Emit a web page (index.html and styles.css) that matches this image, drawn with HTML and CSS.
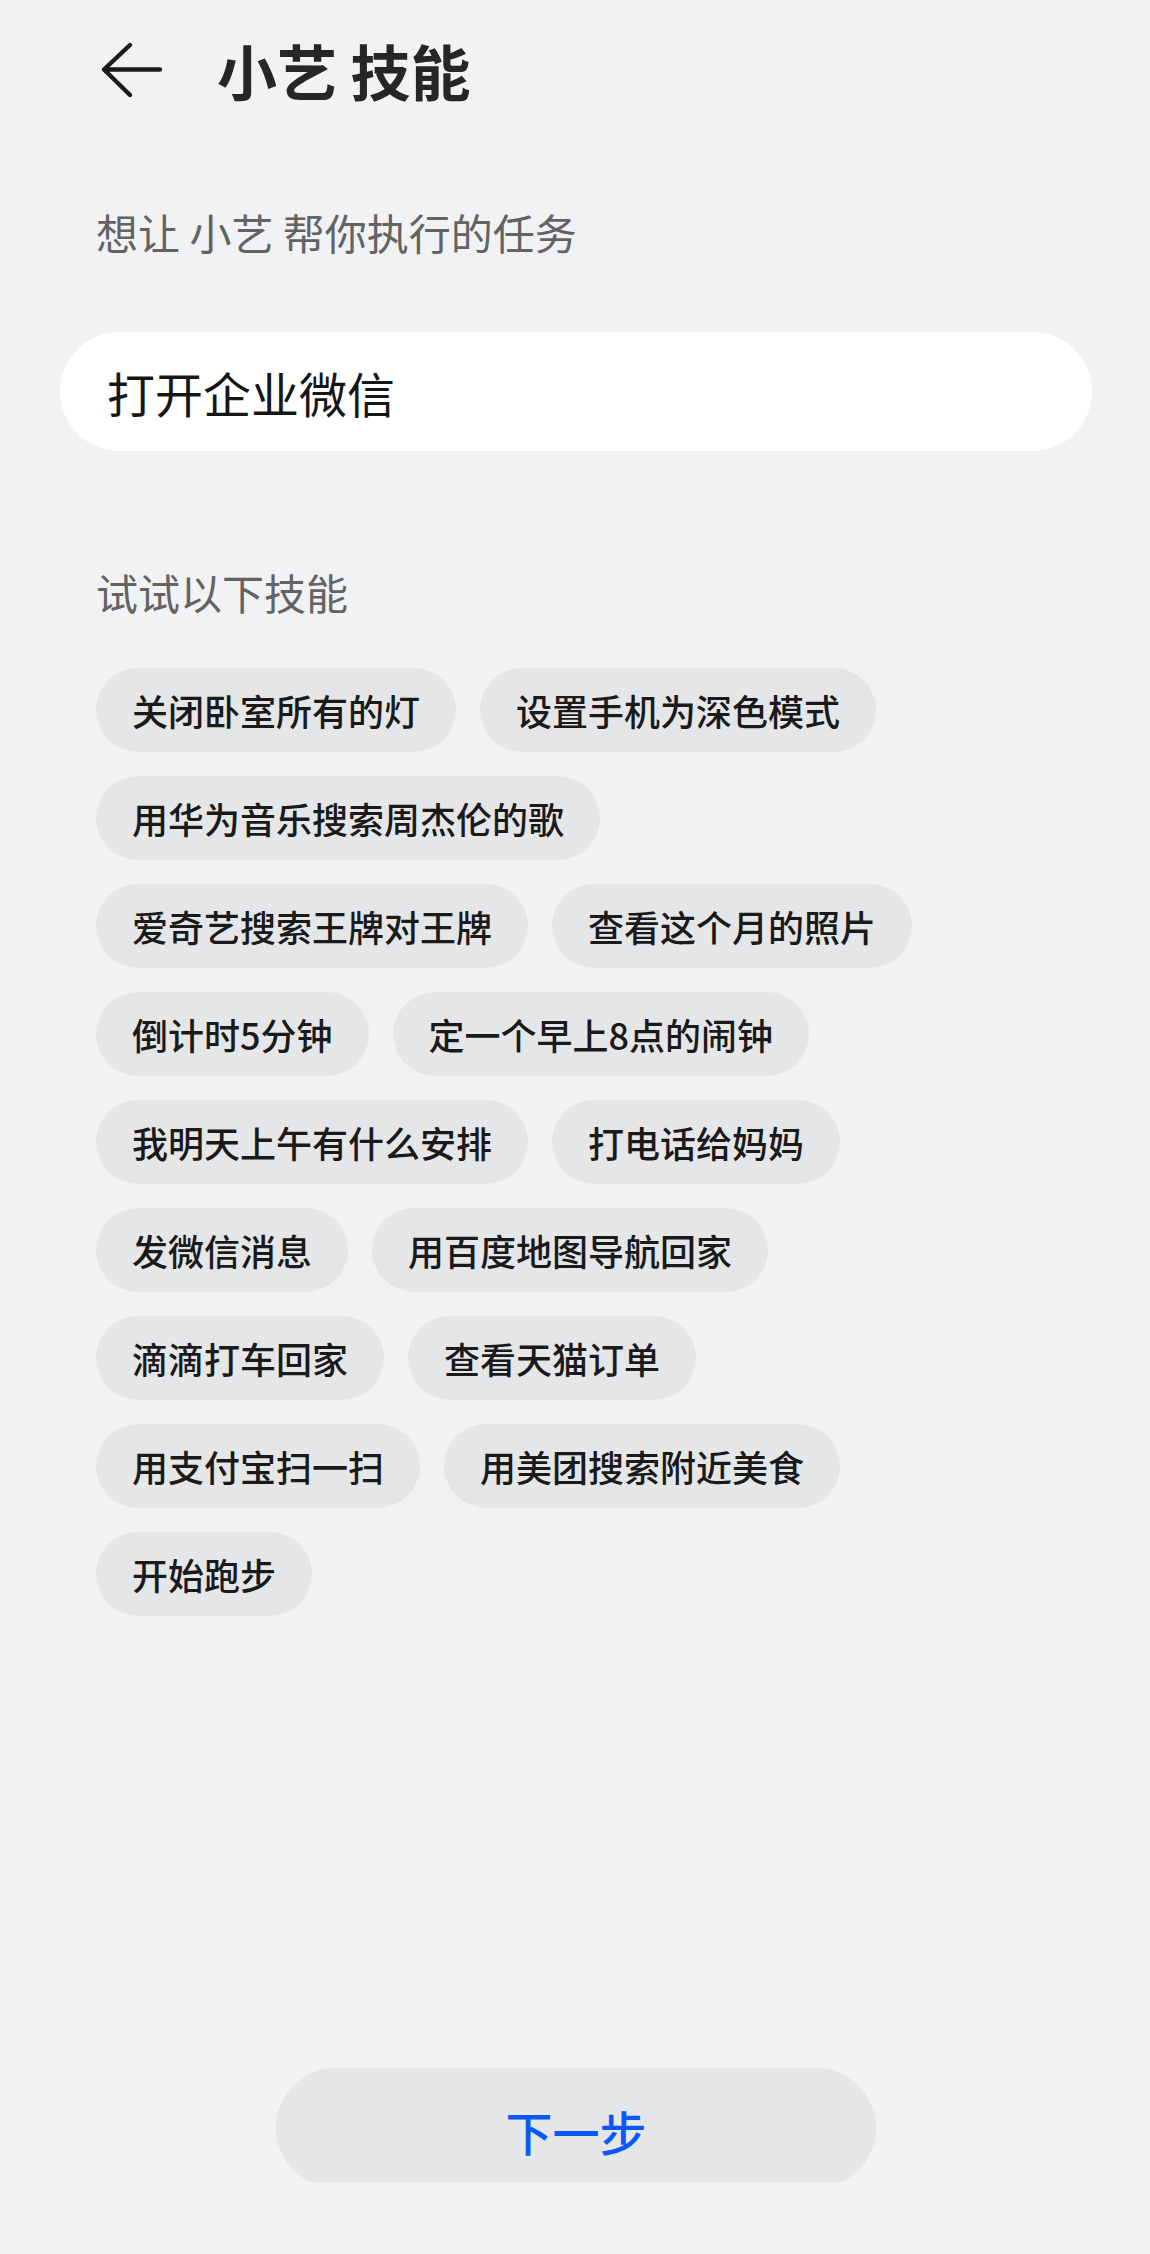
FILE: index.html
```html
<!DOCTYPE html>
<html lang="zh-CN">
<head>
<meta charset="utf-8">
<title>小艺 技能</title>
<link rel="stylesheet" href="styles.css">
</head>
<body>
<div class="page">
  <header class="header">
    <svg class="back" viewBox="0 0 64 60" width="64" height="60" aria-hidden="true">
      <path d="M30 5 L4 29.5 L30 55 M4 29.5 H60" fill="none" stroke="#1b1b1b" stroke-width="4.4" stroke-linecap="round" stroke-linejoin="round"/>
    </svg>
    <h1 class="title">小艺 技能</h1>
  </header>

  <p class="label label-task">想让 小艺 帮你执行的任务</p>

  <div class="input">打开企业微信</div>

  <p class="label label-try">试试以下技能</p>

  <div class="chips">
    <span class="chip">关闭卧室所有的灯</span>
    <span class="chip">设置手机为深色模式</span>
    <span class="chip">用华为音乐搜索周杰伦的歌</span>
    <span class="chip">爱奇艺搜索王牌对王牌</span>
    <span class="chip">查看这个月的照片</span>
    <span class="chip">倒计时5分钟</span>
    <span class="chip">定一个早上8点的闹钟</span>
    <span class="chip">我明天上午有什么安排</span>
    <span class="chip">打电话给妈妈</span>
    <span class="chip">发微信消息</span>
    <span class="chip">用百度地图导航回家</span>
    <span class="chip">滴滴打车回家</span>
    <span class="chip">查看天猫订单</span>
    <span class="chip">用支付宝扫一扫</span>
    <span class="chip">用美团搜索附近美食</span>
    <span class="chip">开始跑步</span>
  </div>

  <footer class="footer">
    <div class="btn-clip">
      <button class="next" type="button">下一步</button>
    </div>
  </footer>
</div>
</body>
</html>
```

FILE: styles.css
```css
* {
  box-sizing: border-box;
}

html, body {
  margin: 0;
  padding: 0;
  background: #f1f2f4;
}

body {
  font-family: "Noto Sans CJK SC", "Noto Sans", sans-serif;
  color: #1a1a1a;
}

.page {
  height: 2254px;
  display: flex;
  flex-direction: column;
}

.header {
  height: 140px;
  display: flex;
  align-items: center;
  padding-left: 100px;
}

.back {
  display: block;
  flex: none;
}

.title {
  margin: 0 0 0 53px;
  font-size: 60px;
  line-height: 72px;
  font-weight: 700;
  color: #262626;
  letter-spacing: 0;
}

.label {
  margin: 0;
  padding-left: 96px;
  font-size: 42px;
  line-height: 50px;
  color: #636363;
  font-weight: 400;
}

.label-task {
  margin-top: 67px;
}

.input {
  margin: 75px 58px 0 60px;
  height: 119px;
  border-radius: 60px;
  background: #ffffff;
  display: flex;
  align-items: center;
  padding-left: 47px;
  font-size: 48px;
  color: #161616;
}

.label-try {
  margin-top: 116px;
}

.chips {
  margin-top: 51px;
  margin-left: 96px;
  width: 930px;
  display: flex;
  flex-wrap: wrap;
  gap: 24px 24px;
}

.chip {
  height: 84px;
  padding: 0 36px;
  border-radius: 42px;
  background: #e5e6e8;
  display: flex;
  align-items: center;
  font-size: 36px;
  font-weight: 500;
  color: #1a1a1a;
  white-space: nowrap;
}

.footer {
  margin-top: auto;
  padding-bottom: 72px;
  display: flex;
  justify-content: center;
}

.btn-clip {
  height: 114px;
  overflow: hidden;
  margin-left: 2px;
}

.next {
  display: block;
  width: 600px;
  height: 120px;
  border: none;
  border-radius: 60px;
  background: #e5e6e8;
  color: #0a59f7;
  font-family: "Noto Sans CJK SC", "Noto Sans", sans-serif;
  font-size: 47px;
  font-weight: 500;
  padding: 0;
  padding-top: 4px;
}
```
